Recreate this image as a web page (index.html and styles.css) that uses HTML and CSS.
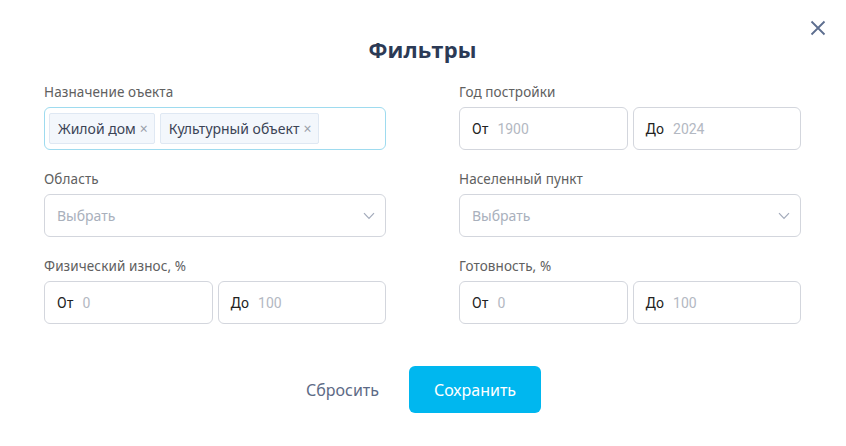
FILE: index.html
```html
<!DOCTYPE html>
<html lang="ru">
<head>
<meta charset="utf-8">
<link rel="stylesheet" href="styles.css">
</head>
<body>
<div class="modal">
  <button class="close" aria-label="Закрыть">
    <svg width="16" height="16" viewBox="0 0 16 16"><path d="M1.5 1.5 L14.5 14.5 M14.5 1.5 L1.5 14.5" stroke="#5d6e8f" stroke-width="1.8" fill="none"/></svg>
  </button>
  <h1 class="title">Фильтры</h1>
  <div class="grid">
    <div class="field">
      <div class="label">Назначение оъекта</div>
      <div class="box multi">
        <span class="tag">Жилой дом <span class="x">×</span></span>
        <span class="tag">Культурный объект <span class="x">×</span></span>
      </div>
    </div>
    <div class="field">
      <div class="label">Год постройки</div>
      <div class="pair">
        <div class="box range"><span class="pre">От</span><span class="ph">1900</span></div>
        <div class="box range"><span class="pre">До</span><span class="ph">2024</span></div>
      </div>
    </div>
    <div class="field">
      <div class="label">Область</div>
      <div class="box select"><span class="ph sel">Выбрать</span>
        <svg class="chev" width="12" height="8" viewBox="0 0 12 8"><path d="M1 1.2 L6 6.5 L11 1.2" stroke="#a3abbb" stroke-width="1.2" fill="none"/></svg>
      </div>
    </div>
    <div class="field">
      <div class="label">Населенный пункт</div>
      <div class="box select"><span class="ph sel">Выбрать</span>
        <svg class="chev" width="12" height="8" viewBox="0 0 12 8"><path d="M1 1.2 L6 6.5 L11 1.2" stroke="#a3abbb" stroke-width="1.2" fill="none"/></svg>
      </div>
    </div>
    <div class="field">
      <div class="label">Физический износ, %</div>
      <div class="pair">
        <div class="box range"><span class="pre">От</span><span class="ph">0</span></div>
        <div class="box range"><span class="pre">До</span><span class="ph">100</span></div>
      </div>
    </div>
    <div class="field">
      <div class="label">Готовность, %</div>
      <div class="pair">
        <div class="box range"><span class="pre">От</span><span class="ph">0</span></div>
        <div class="box range"><span class="pre">До</span><span class="ph">100</span></div>
      </div>
    </div>
  </div>
  <div class="actions">
    <button class="btn reset">Сбросить</button>
    <button class="btn save">Сохранить</button>
  </div>
</div>
</body>
</html>
```
FILE: styles.css
```css
* { box-sizing: border-box; }
html, body { margin: 0; padding: 0; background: #fff; }
body { font-family: "Noto Sans", "Open Sans", sans-serif; color: #333; }
.modal {
  position: relative;
  width: 846px;
  height: 446px;
  padding: 34px 45px 0 44px;
}
.close {
  position: absolute;
  top: 20px;
  right: 20px;
  width: 16px;
  height: 16px;
  padding: 0;
  border: 0;
  background: none;
  display: block;
}
.close svg { display: block; }
.title {
  margin: 0;
  text-align: center;
  font-family: "Open Sans", sans-serif;
  font-weight: 700;
  font-size: 22px;
  line-height: 30px;
  color: #2c3a55;
  letter-spacing: 0.1px;
}
.grid {
  margin-top: 19px;
  display: grid;
  grid-template-columns: 342px 342px;
  column-gap: 73px;
  row-gap: 20px;
}
.label {
  font-size: 13.5px;
  line-height: 18px;
  color: #606060;
  margin-bottom: 6px;
  letter-spacing: 0.1px;
}
.box {
  height: 43px;
  border: 1px solid #d3d6dd;
  border-radius: 6px;
  display: flex;
  align-items: center;
}
.multi {
  border-color: #9edbef;
  padding: 0 4px;
  gap: 5px;
}
.tag {
  height: 31px;
  display: inline-flex;
  align-items: center;
  padding: 0 6px 0 8px;
  background: #f3f7fc;
  border: 1px solid #dfe8f3;
  border-radius: 2px;
  font-size: 14px;
  color: #3b4456;
}
.tag .x {
  margin-left: 4px;
  color: #9aa0aa;
  font-size: 14px;
}
.pair {
  display: grid;
  grid-template-columns: 1fr 1fr;
  gap: 5px;
}
.range { padding: 0 12px; }
.pre {
  font-family: "Roboto", sans-serif;
  font-size: 14px;
  color: #222;
  margin-right: 9px;
}
.ph {
  font-family: "Roboto", sans-serif;
  font-size: 14px;
  color: #b3b8c2;
}
.select { padding: 0 12px 0 12px; justify-content: space-between; }
.ph.sel { font-family: "Noto Sans", sans-serif; font-size: 14px; color: #a9b0bc; }
.chev { display: block; margin-right: -2px; }
.actions {
  margin-top: 42px;
  display: flex;
  justify-content: center;
  align-items: center;
  gap: 30px;
  padding-left: 2px;
}
.btn {
  font-family: "Noto Sans", sans-serif;
  font-size: 16px;
  border: 0;
  cursor: pointer;
}
.reset {
  background: none;
  color: #5d6a86;
  font-weight: 400;
  padding: 0;
}
.save {
  width: 132px;
  height: 47px;
  border-radius: 6px;
  background: #00b7ef;
  color: #fff;
  font-weight: 400;
}
```
